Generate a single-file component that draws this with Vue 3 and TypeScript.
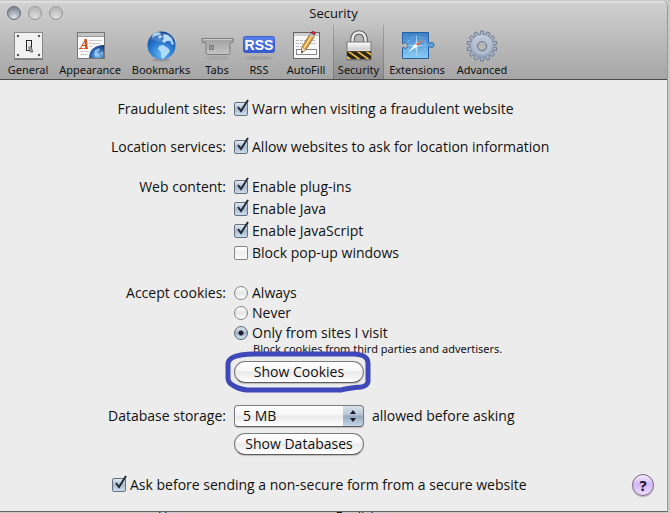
<script setup lang="ts">
import { ref } from 'vue'

interface Option {
  id: string
  label: string
  checked: boolean
}

const tabs: string[] = [
  'General', 'Appearance', 'Bookmarks', 'Tabs', 'RSS',
  'AutoFill', 'Security', 'Extensions', 'Advanced',
]
const activeTab = ref('Security')

const fraud = ref(true)
const location = ref(true)
const content = ref<Option[]>([
  { id: 'plugins', label: 'Enable plug-ins', checked: true },
  { id: 'java', label: 'Enable Java', checked: true },
  { id: 'javascript', label: 'Enable JavaScript', checked: true },
  { id: 'popups', label: 'Block pop-up windows', checked: false },
])
const cookieChoices: string[] = ['Always', 'Never', 'Only from sites I visit']
const cookies = ref('Only from sites I visit')
const storage = ref('5 MB')
const askInsecure = ref(true)
</script>

<template>
  <div class="desktop">
    <main class="window">
      <header class="chrome">
        <div class="titlebar">
          <div class="lights">
            <button class="light close" aria-label="Close"></button>
            <button class="light" aria-label="Minimize"></button>
            <button class="light" aria-label="Zoom"></button>
          </div>
          <h1>Security</h1>
        </div>
        <nav class="toolbar">
          <button
            v-for="tab in tabs"
            :key="tab"
            class="tab"
            :class="{ active: tab === activeTab }"
            @click="activeTab = tab"
          >
            <svg v-if="tab === 'General'" class="icon" viewBox="0 0 32 32">
              <rect x="2.500" y="2.500" width="28" height="26" fill="#f1f1f1" stroke="#888" />
              <path d="M2 29.500h29" stroke="#555" stroke-opacity=".6" />
              <g fill="#555"><circle cx="6" cy="6" r="1.200" /><circle cx="27" cy="6" r="1.200" /><circle cx="6" cy="25" r="1.200" /><circle cx="27" cy="25" r="1.200" /></g>
              <rect x="14.500" y="10.500" width="5" height="10" fill="#fff" stroke="#222" />
              <path d="M16 16h3l2 6h-3z" fill="#999" stroke="#555" stroke-width=".6" />
              <path d="M16 12h2v5h-2z" fill="#ddd" />
            </svg>
            <svg v-else-if="tab === 'Appearance'" class="icon" viewBox="0 0 32 32">
              <defs>
                <radialGradient id="orb" cx=".6" cy=".8" r=".9"><stop offset="0" stop-color="#8ec9f5" /><stop offset=".5" stop-color="#2c67b5" /><stop offset="1" stop-color="#12306c" /></radialGradient>
              </defs>
              <rect x="3.500" y="2.500" width="27" height="26" fill="#fafafa" stroke="#777" />
              <path d="M4 3h26v3H4z" fill="#c4c4c4" /><path d="M4 6.500h26" stroke="#999" />
              <path d="M15 10.500h13M15 13.500h11M6 21.500h9M6 24.500h8M15 16.500h4" stroke="#ccc" />
              <path d="M5 18.500h4M10 18.500h4" stroke="#d2521e" />
              <path d="M6.500 18L11.500 9.500M8 15.500h4" stroke="#d2521e" />
              <path d="M11.500 9l1 9.500" stroke="#d2521e" stroke-width="2.500" />
              <path d="M15 28c0-8 6-13 15-13v13z" fill="url(#orb)" />
              <path d="M21 20l4-2 1 2-3 2 1 3-2 2-2-3zM27 23l2-2v5z" fill="#a8d7f7" opacity=".7" />
            </svg>
            <svg v-else-if="tab === 'Bookmarks'" class="icon" viewBox="0 0 32 32">
              <defs>
                <radialGradient id="globe" cx=".5" cy=".8" r=".8"><stop offset="0" stop-color="#63b5f4" /><stop offset=".55" stop-color="#2877cd" /><stop offset="1" stop-color="#154494" /></radialGradient>
              </defs>
              <ellipse cx="16" cy="30" rx="9" ry="1.500" fill="#777" opacity=".5" />
              <circle cx="16.500" cy="15.500" r="14" fill="url(#globe)" />
              <path d="M8 4c3-2 6-2 8-1l-2 2-4 1-3 2zM13 6l3-1 1 2-3 2zM19 4l4 1 4 4 2 5-2 1-2-4-3 0-3 2-2-2 2-2-1-2zM14 16l4-1 5 3 2 3-3 4-4 4-2-1 0-6-3-3z" fill="#c2e6fc" opacity=".85" />
              <path d="M5 9C9 2 23 1 28 9c-7 4-16 3-23 0z" fill="#fff" opacity=".18" />
            </svg>
            <svg v-else-if="tab === 'Tabs'" class="icon" viewBox="0 0 32 32">
              <defs><linearGradient id="tabFill" x2="0" y2="1"><stop offset="0" stop-color="#a0a0a0" /><stop offset="1" stop-color="#c4c4c4" /></linearGradient></defs>
              <ellipse cx="16" cy="28" rx="12" ry="2" fill="#888" opacity=".25" />
              <path d="M1 8.500h31v4h-2q-1 0-1 2v8q0 2-2 2H7q-2 0-2-2v-8q0-2-1-2H1z" fill="url(#tabFill)" stroke="#7c7c7c" />
              <path d="M2 9.500h29" stroke="#ddd" opacity=".7" />
              <path d="M8.500 15.500h4v4h-4zM9 16l3 3m0-3l-3 3" fill="none" stroke="#707070" stroke-width=".8" />
            </svg>
            <svg v-else-if="tab === 'RSS'" class="icon" viewBox="0 0 32 32">
              <defs><linearGradient id="rssFill" x2="0" y2="1"><stop offset="0" stop-color="#5a83ee" /><stop offset="1" stop-color="#3658cc" /></linearGradient></defs>
              <ellipse cx="16" cy="28" rx="14" ry="2" fill="#777" opacity=".25" />
              <rect x=".5" y="6.500" width="31" height="16" rx="2" fill="url(#rssFill)" stroke="#385fc9" />
              <text x="16" y="20" text-anchor="middle" class="rss-text">RSS</text>
            </svg>
            <svg v-else-if="tab === 'AutoFill'" class="icon" viewBox="0 0 32 32">
              <rect x="3.500" y="2.500" width="26" height="26" fill="#f7f7f7" stroke="#666" />
              <path d="M4 3h25v3H4z" fill="#d0d0d0" />
              <path d="M6 10.500h20M6 13.500h7M20 13.500h6M6 16.500h5" stroke="#bbb" stroke-dasharray="3 1" />
              <rect x="6.500" y="19.500" width="20" height="5" fill="#fff" stroke="#888" />
              <path d="M12 17L20.500 3.500l4 2.500L16 19.500l-4.500 3.500z" fill="#e8ab45" stroke="#7a531d" stroke-width=".8" />
              <path d="M14 18L22.500 4.500" stroke="#fae09a" stroke-width="1.200" />
              <path d="M12 17l4 2.500-4.500 3.500z" fill="#f4dfb8" stroke="#8c724c" stroke-width=".5" />
              <path d="M11.500 23l.3-2 1.500 1z" fill="#222" />
              <path d="M19.500 5l4 2.500 1.300-2-4-2.500z" fill="#b9c4c9" />
              <path d="M20.800 3q2-3 4-.8.8 1 0 2.800z" fill="#c9272d" stroke="#851a20" stroke-width=".6" />
            </svg>
            <svg v-else-if="tab === 'Security'" class="icon" viewBox="0 0 32 32">
              <defs>
                <linearGradient id="lockFill" x2="0" y2="1"><stop offset="0" stop-color="#fff" /><stop offset=".4" stop-color="#d4d4d4" /><stop offset=".7" stop-color="#f4f4f4" /></linearGradient>
                <clipPath id="lockBase"><rect x="4" y="21" width="24" height="8" /></clipPath>
              </defs>
              <path d="M9.500 13V9.500c0-9.500 13-9.500 13 0v3.500" fill="none" stroke="#5c5c5c" stroke-width="4.500" />
              <path d="M9.500 13V9.500c0-9.500 13-9.500 13 0v3.500" fill="none" stroke="#ededed" stroke-width="2.500" />
              <rect x="4" y="12" width="24" height="17" fill="url(#lockFill)" stroke="#686868" stroke-width=".8" />
              <path d="M4 21h24v8H4z" fill="#efbc3d" />
              <g clip-path="url(#lockBase)"><path d="M-1 20l14 10M8 20l14 10M17 20l14 10M26 20l14 10" stroke="#29241c" stroke-width="3.500" /></g>
              <path d="M4 21.500h24" stroke="#54462a" stroke-width=".8" />
              <path d="M3 30h26" stroke="#333" opacity=".4" />
            </svg>
            <svg v-else-if="tab === 'Extensions'" class="icon" viewBox="0 0 32 32">
              <defs><linearGradient id="puzzleFill" x2="0" y2="1"><stop offset="0" stop-color="#3d7fc9" /><stop offset="1" stop-color="#88ccf7" /></linearGradient></defs>
              <path d="M1.500 2.500h26v10.500c0 .8 1 .8 1.500 0 1.500-1 4-.5 4 2s-2.500 3-4 2c-.5-.8-1.500-.8-1.500 0v11.500h-26v-10.500c0-1 1-1 1.800 0 1.800 1 3.200 0 3.200-2.500s-1.500-3.500-3.200-2.500c-.8 1-1.800 1-1.800 0z" fill="url(#puzzleFill)" stroke="#255f9f" />
              <circle cx="15.500" cy="15.500" r="9" fill="none" stroke="#c9e8fb" stroke-width=".8" stroke-dasharray="1 2" />
              <path d="M15.500 4l1 11 9 .5-9 1-1 11-1-11-9-1 9-.5z" fill="#c5e7fb" opacity=".8" />
              <path d="M22.500 9l-5.500 7-2-2z" fill="#c2624b" /><path d="M22.500 9L14 14l1 1z" fill="#f0a58d" />
              <path d="M7 22.500l10-6.500-3-2z" fill="#f5faff" />
            </svg>
            <svg v-else class="icon" viewBox="0 0 32 32">
              <defs><linearGradient id="gearFill" x2="0" y2="1"><stop offset="0" stop-color="#c8d1df" /><stop offset="1" stop-color="#94a2bb" /></linearGradient></defs>
              <g fill="#a7b3c8" stroke="#64718a" stroke-width=".8">
                <path v-for="n in 14" :key="n" d="M13.800 6l.8-5h2.800l.8 5z" :transform="`rotate(${(n * 360) / 14} 16 16)`" />
              </g>
              <circle cx="16" cy="16" r="11.500" fill="url(#gearFill)" stroke="#7a87a0" stroke-width=".6" />
              <circle cx="16" cy="16" r="7.500" fill="none" stroke="#b8c3d2" stroke-width="2" />
              <circle cx="16" cy="16" r="4.500" fill="#b7b7b7" stroke="#69758c" />
            </svg>
            <span>{{ tab }}</span>
          </button>
        </nav>
      </header>

      <form class="settings" @submit.prevent>
        <div class="group fraud">
          <span class="caption">Fraudulent sites:</span>
          <label class="option">
            <span class="check"><input v-model="fraud" type="checkbox"><svg viewBox="0 0 16 17"><path d="M4 8l3 4 7-11" /></svg></span>
            Warn when visiting a fraudulent website
          </label>
        </div>

        <div class="group location">
          <span class="caption">Location services:</span>
          <label class="option">
            <span class="check"><input v-model="location" type="checkbox"><svg viewBox="0 0 16 17"><path d="M4 8l3 4 7-11" /></svg></span>
            Allow websites to ask for location information
          </label>
        </div>

        <div class="group content">
          <span class="caption">Web content:</span>
          <div>
            <label v-for="item in content" :key="item.id" class="option">
              <span class="check"><input v-model="item.checked" type="checkbox"><svg viewBox="0 0 16 17"><path d="M4 8l3 4 7-11" /></svg></span>
              {{ item.label }}
            </label>
          </div>
        </div>

        <div class="group cookies">
          <span class="caption">Accept cookies:</span>
          <div>
            <label v-for="choice in cookieChoices" :key="choice" class="option">
              <input v-model="cookies" class="radio" type="radio" name="cookies" :value="choice">
              {{ choice }}
            </label>
            <p class="hint">Block cookies from third parties and advertisers.</p>
            <div class="marked">
              <button type="button" class="push">Show Cookies</button>
              <svg class="marker" viewBox="0 0 146 42">
                <path d="M16 4Q22 3 30 3H130Q138 4 140 6Q143 8 143 13V31Q142 35 136 36Q124 37 116 39H22Q14 38 9 35Q3 32 3 27V12Q4 6 16 4Z" />
              </svg>
            </div>
          </div>
        </div>

        <div class="group database">
          <label class="caption" for="storage">Database storage:</label>
          <div>
            <div class="storage">
              <span class="popup">
                <select id="storage" v-model="storage">
                  <option>5 MB</option>
                </select>
                <svg viewBox="0 0 20 20"><path d="M10 4l3 4H7zM10 16l3-4H7z" /></svg>
              </span>
              <span>allowed before asking</span>
            </div>
            <button type="button" class="push">Show Databases</button>
          </div>
        </div>

        <div class="footer">
          <label class="option">
            <span class="check"><input v-model="askInsecure" type="checkbox"><svg viewBox="0 0 16 17"><path d="M4 8l3 4 7-11" /></svg></span>
            Ask before sending a non-secure form from a secure website
          </label>
          <button type="button" class="help" aria-label="Help">?</button>
        </div>
      </form>
    </main>
    <div class="behind"><span>Un</span><span>English</span></div>
  </div>
</template>

<style>
body {
  margin: 0;
  background: #c9c9c9;
}
</style>

<style scoped>
.desktop {
  padding: 1px 2px 0 0;
  font: 14px/22px "Open Sans", "Noto Sans", sans-serif;
  color: #111;
}
.window {
  border: 1px solid #999;
  border-width: 0 1px 1px 0;
  border-radius: 0 6px 0 0;
  border-bottom-color: #666;
  background: #ececec;
  overflow: hidden;
}
.chrome {
  background: linear-gradient(#e6e6e6 0, #cfcfcf 3px, #a6a6a6);
  border-bottom: 1px solid #4d4d4d;
}
.titlebar {
  position: relative;
  height: 24px;
}
h1 {
  margin: 0;
  font-size: 13px;
  line-height: 24px;
  font-weight: 400;
  text-align: center;
}
.lights {
  position: absolute;
  left: 7px;
  top: 5px;
  display: flex;
  gap: 7px;
}
.light {
  width: 14px;
  height: 14px;
  padding: 0;
  border: 1px solid #979797;
  border-radius: 50%;
  background: radial-gradient(circle at 50% 85%, #dedede, #bcbcbc 70%);
}
.light.close {
  border-color: #656b75;
  background: radial-gradient(circle at 50% 85%, #dce2ea, #858d99 75%);
}
.toolbar {
  display: grid;
  grid-template-columns: 50px 74px 68px 44px 40px 54px 51px 66px 64px;
  padding-left: 3px;
}
.tab {
  display: flex;
  flex-direction: column;
  align-items: center;
  height: 54px;
  padding: 5px 0 0;
  border: 0;
  background: none;
  font: 11px/16px "Noto Sans", "Open Sans", sans-serif;
  color: #111;
  white-space: nowrap;
}
.tab.active {
  background: linear-gradient(rgba(90, 90, 90, 0), rgba(90, 90, 90, .3));
  box-shadow: inset 1px 0 rgba(80, 80, 80, .3), inset -1px 0 rgba(80, 80, 80, .3);
}
.icon {
  flex: none;
  width: 32px;
  height: 32px;
  overflow: visible;
}
.rss-text {
  font: bold 14px "Liberation Sans", sans-serif;
  fill: #fff;
}
.settings {
  padding: 18px 13px 15px 0;
}
.group {
  display: grid;
  grid-template-columns: 226px 1fr;
  column-gap: 8px;
}
.caption {
  text-align: right;
}
.location { margin-top: 16px; }
.content { margin-top: 18px; }
.cookies {
  margin-top: 19px;
  line-height: 20px;
}
.database { margin-top: 22px; }
.option {
  display: flex;
  align-items: center;
  gap: 4px;
}
.check {
  position: relative;
  display: flex;
}
.check input {
  appearance: none;
  width: 14px;
  height: 14px;
  margin: 0;
  border: 1px solid #868686;
  border-radius: 2px;
  background: linear-gradient(#fff, #eee 50%, #fff);
}
.check input:checked {
  border-color: #66707c;
  background: linear-gradient(#e2eaf3, #a9bace 50%, #cbdeee);
}
.check svg {
  position: absolute;
  left: 0;
  bottom: 0;
  width: 16px;
  height: 17px;
  fill: none;
  stroke: #222936;
  stroke-width: 2;
  pointer-events: none;
  visibility: hidden;
}
.check input:checked + svg { visibility: visible; }
.radio {
  appearance: none;
  width: 14px;
  height: 14px;
  margin: 0;
  border: 1px solid #848484;
  border-radius: 50%;
  background: linear-gradient(#fff, #e6e6e6 50%, #fff);
}
.radio:checked {
  border-color: #5c6673;
  background:
    radial-gradient(circle, #1a202b 2px, transparent 3px),
    linear-gradient(#e2eaf3, #a2b4c9 50%, #d5e7f6);
}
.hint {
  margin: 0 0 6px 19px;
  font-family: "Noto Sans", "Open Sans", sans-serif;
  font-size: 11px;
  line-height: 12px;
}
.push {
  display: block;
  width: 130px;
  height: 22px;
  padding: 0;
  border: 1px solid #7b7b7b;
  border-bottom-color: #5d5d5d;
  border-radius: 11px;
  background: linear-gradient(#fff, #f6f6f6 45%, #e9e9e9 50%, #fff);
  box-shadow: 0 1px 1px rgba(0, 0, 0, .2);
  font: inherit;
  line-height: 20px;
  color: #111;
}
.marked {
  position: relative;
  width: max-content;
}
.marker {
  position: absolute;
  left: -9px;
  top: -10px;
  width: 146px;
  height: 42px;
  fill: none;
  stroke: #3e48b8;
  stroke-width: 5;
  pointer-events: none;
}
.storage {
  display: flex;
  gap: 8px;
  margin-bottom: 6px;
}
.popup {
  position: relative;
  width: 130px;
  height: 22px;
}
.popup select {
  appearance: none;
  width: 100%;
  height: 22px;
  padding: 0 8px;
  border: 1px solid #7b7b7b;
  border-bottom-color: #5d5d5d;
  border-radius: 4px;
  background:
    linear-gradient(#dbe4ee, #b4c3d4 45%, #94a8be 50%, #c4d6e7) right / 20px 100% no-repeat,
    linear-gradient(#fff, #f6f6f6 45%, #e9e9e9 50%, #fff);
  box-shadow: 0 1px 1px rgba(0, 0, 0, .2);
  font: inherit;
  line-height: 20px;
  color: #111;
}
.popup svg {
  position: absolute;
  right: 1px;
  top: 1px;
  width: 20px;
  height: 20px;
  fill: #161b24;
  pointer-events: none;
}
.footer {
  display: flex;
  align-items: center;
  justify-content: space-between;
  margin-top: 19px;
  padding-left: 112px;
}
.help {
  width: 22px;
  height: 22px;
  padding: 0;
  border: 1px solid #77688b;
  border-radius: 50%;
  background: linear-gradient(#f4e9ff, #d4b7f3 50%, #f0ddff);
  box-shadow: 0 1px 1px rgba(0, 0, 0, .25);
  font: bold 15px/20px "Noto Sans", sans-serif;
  color: #1d1527;
}
.behind {
  display: flex;
  gap: 160px;
  height: 1px;
  padding-left: 158px;
  overflow: hidden;
  font-size: 13px;
  line-height: 8px;
}
</style>
